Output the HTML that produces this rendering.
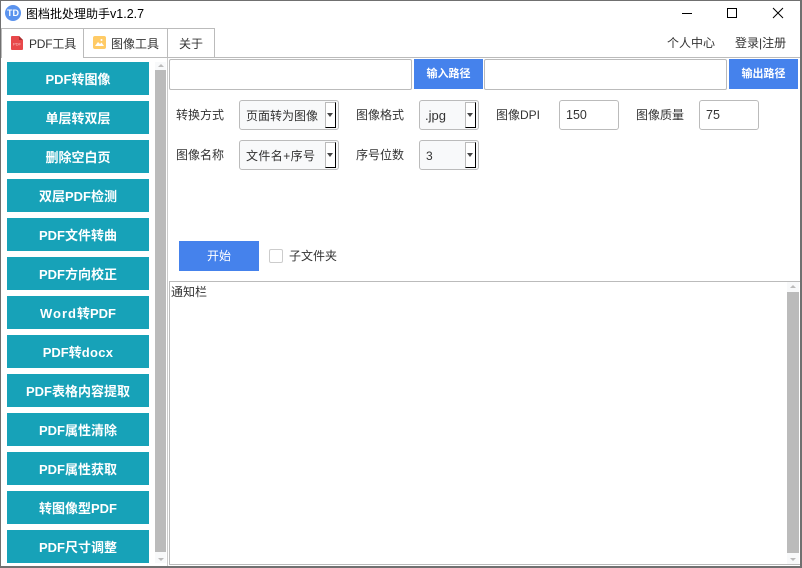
<!DOCTYPE html>
<html><head><meta charset="utf-8">
<style>
html,body{margin:0;padding:0;background:#fff}
body{width:802px;height:568px;overflow:hidden;position:relative;font-family:"Liberation Sans","Microsoft YaHei","Noto Sans CJK SC",sans-serif;font-size:12px;color:#333}
.a{position:absolute;box-sizing:border-box}
.t{position:absolute;white-space:nowrap;line-height:16px}
.b{position:absolute;left:7px;width:142px;height:33px;background:#17a2b8;color:#fff;font-weight:bold;font-size:13px;text-align:center;line-height:35px}
.l{letter-spacing:1px}
.bl{position:absolute;background:#4582ec;color:#fff;text-align:center;font-size:11px;font-weight:bold}
.in{position:absolute;box-sizing:border-box;background:#fff;border:1px solid #bbb;border-radius:2px}
.sel{position:absolute;box-sizing:border-box;background:#f8f9fa;border:1px solid #bbb;border-radius:3px;height:30px;line-height:30px;padding-left:6px;font-size:12px;color:#333}
.dd{position:absolute;top:1px;right:2px;width:11px;height:26px;background:#fff;border:1px solid #bbb;border-right:1px solid #000;border-bottom:1px solid #000;box-sizing:border-box}
.dd:after{content:"";position:absolute;left:1px;top:10px;border-left:3.5px solid transparent;border-right:3.5px solid transparent;border-top:4px solid #444}
.tab{position:absolute;box-sizing:border-box;border:1px solid #bbb;top:28px;font-size:12px;line-height:29px;color:#333}
.lab{position:absolute;font-size:12px;line-height:16px;white-space:nowrap;color:#333}
</style></head><body>
<!-- window frame -->
<div class="a" style="left:0;top:0;width:802px;height:1px;background:#707070"></div>
<div class="a" style="left:0;top:0;width:1px;height:568px;background:#707070"></div>
<div class="a" style="left:800px;top:0;width:2px;height:568px;background:#707070"></div>
<div class="a" style="left:0;top:566px;width:802px;height:2px;background:#707070"></div>

<!-- title bar -->
<div class="a" style="left:5px;top:5px;width:16px;height:16px;border-radius:50%;background:#5b93ee;color:#fff;font-size:9px;font-weight:bold;text-align:center;line-height:16px">TD</div>
<div class="t" style="left:26px;top:6px;font-size:12px;color:#000">图档批处理助手<span style="font-size:12.5px">v1.2.7</span></div>
<svg class="a" style="left:680px;top:5px" width="110" height="16" viewBox="0 0 110 16">
<path d="M2 8.5H12" stroke="#000" stroke-width="1" fill="none"/>
<rect x="47.5" y="3.5" width="9" height="9" stroke="#000" fill="none"/>
<path d="M93 3L103 13M103 3L93 13" stroke="#000" stroke-width="1" fill="none"/>
</svg>

<!-- tabs -->
<div class="a" style="left:1px;top:57px;width:799px;height:1px;background:#bbb"></div>
<div class="tab" style="left:1px;width:83px;height:30px;background:#fff;border-bottom:none;z-index:2"></div>
<svg class="a" style="left:11px;top:36px;z-index:3" width="12" height="14" viewBox="0 0 12 14"><path d="M0 1Q0 0 1 0H8L12 4V13Q12 14 11 14H1Q0 14 0 13Z" fill="#e8484a"/><path d="M8 0L12 4H8Z" fill="#a92f31"/><text x="2" y="9.5" font-size="4" fill="#f9c8c8" font-family="Liberation Sans">PDF</text></svg>
<div class="t" style="left:29px;top:36px;z-index:3;font-size:12px;letter-spacing:-.2px">PDF工具</div>
<div class="tab" style="left:83px;width:85px;height:30px;background:#fff"></div>
<svg class="a" style="left:93px;top:36px" width="13" height="13" viewBox="0 0 13 13"><rect width="13" height="13" rx="2" fill="#ffcb66"/><path d="M2 10L5 6L7 8L8.5 6.5L11 10Z" fill="#fff"/><circle cx="8.5" cy="4" r="1" fill="#fff"/></svg>
<div class="t" style="left:111px;top:36px">图像工具</div>
<div class="tab" style="left:167px;width:48px;height:30px;background:#fff"></div>
<div class="t" style="left:179px;top:36px">关于</div>
<div class="t" style="left:667px;top:35px">个人中心</div>
<div class="t" style="left:735px;top:35px">登录|注册</div>

<!-- left buttons -->
<div class="b" style="top:62px">PDF转图像</div>
<div class="b" style="top:101px">单层转双层</div>
<div class="b" style="top:140px">删除空白页</div>
<div class="b" style="top:179px">双层PDF检测</div>
<div class="b" style="top:218px">PDF文件转曲</div>
<div class="b" style="top:257px">PDF方向校正</div>
<div class="b" style="top:296px"><span class="l">Word</span>转PDF</div>
<div class="b" style="top:335px">PDF转<span style="letter-spacing:.3px">docx</span></div>
<div class="b" style="top:374px">PDF表格内容提取</div>
<div class="b" style="top:413px">PDF属性清除</div>
<div class="b" style="top:452px">PDF属性获取</div>
<div class="b" style="top:491px">转图像型PDF</div>
<div class="b" style="top:530px">PDF尺寸调整</div>

<!-- left scrollbar -->
<div class="a" style="left:155px;top:62px;width:11px;height:501px;background:#f8f9fa"></div>
<div class="a" style="left:155px;top:70px;width:11px;height:482px;background:#bbb"></div>
<div class="a" style="left:158px;top:64px;border-left:3px solid transparent;border-right:3px solid transparent;border-bottom:3px solid #bbb"></div>
<div class="a" style="left:158px;top:558px;border-left:3px solid transparent;border-right:3px solid transparent;border-top:3px solid #bbb"></div>
<div class="a" style="left:167px;top:58px;width:1px;height:508px;background:#ccc"></div>

<!-- paths -->
<div class="in" style="left:169px;top:59px;width:243px;height:31px"></div>
<div class="bl" style="left:414px;top:59px;width:69px;height:30px;line-height:30px">输入路径</div>
<div class="in" style="left:484px;top:59px;width:243px;height:31px"></div>
<div class="bl" style="left:729px;top:59px;width:69px;height:30px;line-height:30px">输出路径</div>

<!-- options -->
<div class="lab" style="left:176px;top:107px">转换方式</div>
<div class="sel" style="left:239px;top:100px;width:100px">页面转为图像<span class="dd"></span></div>
<div class="lab" style="left:356px;top:107px">图像格式</div>
<div class="sel" style="left:419px;top:100px;width:60px;font-size:13px;padding-left:5px">.jpg<span class="dd"></span></div>
<div class="lab" style="left:496px;top:107px">图像DPI</div>
<div class="in" style="left:559px;top:100px;width:60px;height:30px;line-height:29px;padding-left:6px;border-radius:3px;font-size:12.5px">150</div>
<div class="lab" style="left:636px;top:107px">图像质量</div>
<div class="in" style="left:699px;top:100px;width:60px;height:30px;line-height:29px;padding-left:6px;border-radius:3px;font-size:12.5px">75</div>

<div class="lab" style="left:176px;top:147px">图像名称</div>
<div class="sel" style="left:239px;top:140px;width:100px;letter-spacing:.4px">文件名+序号<span class="dd"></span></div>
<div class="lab" style="left:356px;top:147px">序号位数</div>
<div class="sel" style="left:419px;top:140px;width:60px">3<span class="dd"></span></div>

<!-- start -->
<div class="bl" style="left:179px;top:241px;width:80px;height:30px;line-height:30px;font-size:12px;font-weight:normal">开始</div>
<div class="a" style="left:269px;top:249px;width:14px;height:14px;border:1px solid #ccc;border-radius:2px;background:#fff"></div>
<div class="lab" style="left:289px;top:248px">子文件夹</div>

<!-- notifications -->
<div class="a" style="left:169px;top:281px;width:631px;height:1px;background:#bbb"></div>
<div class="a" style="left:169px;top:281px;width:1px;height:284px;background:#bbb"></div>
<div class="a" style="left:169px;top:564px;width:631px;height:1px;background:#bbb"></div>
<div class="t" style="left:171px;top:284px;font-size:12px">通知栏</div>
<div class="a" style="left:787px;top:282px;width:12px;height:282px;background:#f8f9fa"></div>
<div class="a" style="left:787px;top:292px;width:12px;height:261px;background:#bbb"></div>
<div class="a" style="left:790px;top:285px;border-left:3px solid transparent;border-right:3px solid transparent;border-bottom:3px solid #bbb"></div>
<div class="a" style="left:790px;top:558px;border-left:3px solid transparent;border-right:3px solid transparent;border-top:3px solid #bbb"></div>
</body></html>
